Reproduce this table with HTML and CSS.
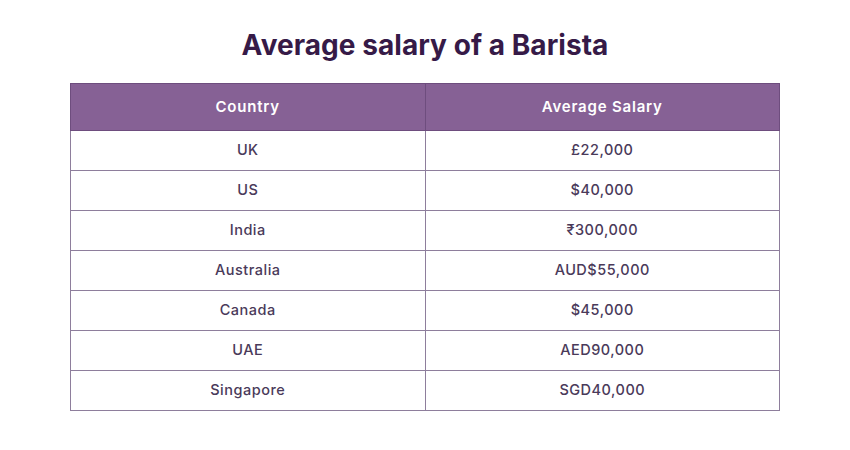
FILE: index.html
```html
<!DOCTYPE html>
<html>
<head>
<meta charset="utf-8">
<link rel="stylesheet" href="styles.css">
</head>
<body>
<div class="page">
  <h1 class="title">Average salary of a Barista</h1>
  <table class="salary">
    <thead>
      <tr><th>Country</th><th>Average Salary</th></tr>
    </thead>
    <tbody>
      <tr><td>UK</td><td>£22,000</td></tr>
      <tr><td>US</td><td>$40,000</td></tr>
      <tr><td>India</td><td>₹300,000</td></tr>
      <tr><td>Australia</td><td>AUD$55,000</td></tr>
      <tr><td>Canada</td><td>$45,000</td></tr>
      <tr><td>UAE</td><td>AED90,000</td></tr>
      <tr><td>Singapore</td><td>SGD40,000</td></tr>
    </tbody>
  </table>
</div>
</body>
</html>
```
FILE: styles.css
```css
html, body {
  margin: 0;
  padding: 0;
  background: #ffffff;
}
.page {
  width: 850px;
  height: 450px;
  display: flex;
  flex-direction: column;
  align-items: center;
  font-family: "Inter", "Open Sans", sans-serif;
}
.title {
  margin: 26px 0 0 0;
  height: 57px;
  line-height: 38px;
  font-size: 28px;
  font-weight: 700;
  color: #361a47;
  letter-spacing: 0.05px;
}
.salary {
  width: 710px;
  border-collapse: collapse;
  table-layout: fixed;
}
.salary th, .salary td {
  border: 1px solid #8e7e9c;
  text-align: center;
  padding: 0;
}
.salary th {
  background: #866195;
  color: #ffffff;
  font-size: 15px;
  font-weight: 600;
  height: 45px;
  padding-bottom: 1px;
  border-color: #6e4d7e;
  letter-spacing: 0.8px;
}
.salary td {
  height: 36px;
  padding-bottom: 3px;
  font-size: 14.5px;
  font-weight: 500;
  color: #4a3a5a;
  letter-spacing: 0.5px;
}
```
